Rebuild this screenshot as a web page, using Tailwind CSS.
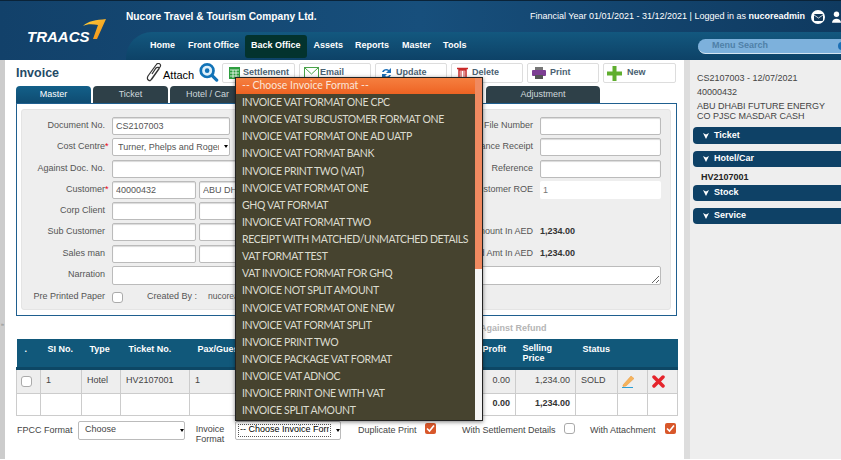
<!DOCTYPE html>
<html>
<head>
  <meta charset="UTF-8">
  <meta name="viewport" content="width=device-width, initial-scale=1.0">
  <script src="https://cdn.jsdelivr.net/npm/@tailwindcss/browser@4"></script>
</head>

<body class="relative w-[841px] h-[460px] overflow-hidden bg-white font-['Liberation_Sans',sans-serif] text-[9px] text-[#444]">

  <!-- top header -->
  <header class="flex h-[60px] border-t border-[#0a2338] bg-gradient-to-r from-[#12416a] via-[#174f7c] to-[#0f3a60]">
    <div class="w-[126px] shrink-0 pl-[27px] pt-[18px]">
      <div class="flex items-start">
        <span class="mt-[7px] text-[15px] font-bold italic text-white">TRAACS</span>
        <svg width="23" height="20" viewBox="0 0 23 20" class="-ml-[7px]"><defs><linearGradient id="sw" x1="0" y1="0" x2="1" y2="1"><stop offset="0" stop-color="#ffd23c"/><stop offset="1" stop-color="#ee8a14"/></linearGradient></defs><path d="M0 7 C5 2 13 1 23 0 L14 20 L10 20 L15 6 C9 5 4 5 0 7Z" fill="url(#sw)"/></svg>
      </div>
    </div>
    <div class="flex grow flex-col">
      <div class="flex h-[31px] items-center justify-between pt-[1px] text-white">
        <span class="text-[10.2px] font-bold">Nucore Travel &amp; Tourism Company Ltd.</span>
        <div class="flex items-center">
          <span>Financial Year 01/01/2021 - 31/12/2021 | Logged in as <b>nucoreadmin</b></span>
          <span class="ml-[6px] flex h-[14px] w-[14px] items-center justify-center rounded-full bg-white">
            <svg width="9" height="7" viewBox="0 0 9 7"><rect width="9" height="7" rx="1" fill="#12385a"/><path d="M0 1 L4.500 4 L9 1" fill="none" stroke="#fff" stroke-width=".8"/></svg>
          </span>
          <svg width="9" height="12" viewBox="0 0 10 13" class="ml-[7px]"><circle cx="5" cy="3.500" r="3" fill="#fff"/><path d="M0 13 C0 7 10 7 10 13Z" fill="#fff"/></svg>
        </div>
      </div>
      <nav class="flex h-[28px] items-center justify-between rounded-tl-[26px] bg-gradient-to-b from-[#13587f] to-[#0d4267] font-bold text-white">
        <div class="flex items-center pl-[24px]">
          <a class="mr-[13px]">Home</a>
          <a class="mr-[6px]">Front Office</a>
          <a class="mr-[7px] flex h-[23px] items-center rounded-[3px] bg-[#03332e] px-[6px]">Back Office</a>
          <a class="mr-[12px]">Assets</a>
          <a class="mr-[13px]">Reports</a>
          <a class="mr-[12px]">Master</a>
          <a>Tools</a>
        </div>
        <div class="flex h-[15px] w-[143px] items-center justify-between rounded-l-full border-b border-[#d6e6f2] bg-[#7db1dc] pl-[14px] text-[#4f80a8]">
          <span>Menu Search</span>
          <span class="-mr-[1px] h-[8px] w-[4px] rounded-l-full bg-[#1b6fb5]"></span>
        </div>
      </nav>
    </div>
  </header>

  <div class="flex h-[399px]">
    <!-- collapse strip -->
    <div class="flex w-[5px] shrink-0 flex-col items-center bg-[#ccc] pt-[260px] text-[6px] text-[#888]">»</div>

    <main class="w-[679px] shrink-0 pl-[11px] pr-[7px]">
      <!-- title and actions -->
      <div class="flex h-[26px] items-center">
        <h1 class="w-[130px] text-[12.5px] font-bold text-[#244a66]">Invoice</h1>
        <div class="flex w-[76px] shrink-0 items-center">
          <svg width="17" height="20" viewBox="0 0 17 20"><path d="M4 18 L14 4 C16 1 12 -1 10 2 L2 13 C0 17 4 19 6 16 L13 6 C14 4 11 4 10 5 L6 11" fill="none" stroke="#333" stroke-width="1.200"/></svg>
          <span class="mt-[4px] text-[11px] text-black">Attach</span>
          <svg width="21" height="20" viewBox="0 0 22 22" class="-mt-[2px] ml-[4px]"><circle cx="9.500" cy="9.500" r="7" fill="#dff0fa" stroke="#1273b7" stroke-width="3"/><circle cx="9.500" cy="9.500" r="2.500" fill="#1273b7"/><path d="M15 15 L20 20" stroke="#1273b7" stroke-width="3.500" stroke-linecap="round"/></svg>
        </div>
        <div class="flex gap-[4px] font-bold text-[#4a6172]">
          <button class="flex h-[20px] w-[73px] items-center gap-[3px] rounded-[2px] border border-[#ddd] pl-[6px]">
            <svg width="11" height="12" viewBox="0 0 11 12"><rect width="11" height="12" fill="#2e9e3f"/><path d="M1 3h9M1 6h9M1 9h9M4 3v8M7 3v8" stroke="#fff" stroke-width=".8"/></svg>
            Settlement
          </button>
          <button class="flex h-[20px] w-[72px] items-center gap-[1px] rounded-[2px] border border-[#ddd] pl-[4px]">
            <svg width="15" height="12" viewBox="0 0 15 12"><rect x=".5" y=".5" width="14" height="11" fill="#fff" stroke="#4aa34a"/><path d="M1 1 L7.500 7 L14 1" fill="none" stroke="#4aa34a"/></svg>
            Email
          </button>
          <button class="flex h-[20px] w-[72px] items-center gap-[4px] rounded-[2px] border border-[#ddd] pl-[5px]">
            <svg width="11" height="13" viewBox="0 0 11 13"><path d="M1 5 C2 2 6 1 8 3 L10 1 L10 6 L5 6 L7 4 C5 3 3 4 3 5Z" fill="#1c6fb8"/><path d="M10 8 C9 11 5 12 3 10 L1 12 L1 7 L6 7 L4 9 C6 10 8 9 8 8Z" fill="#1c6fb8"/></svg>
            Update
          </button>
          <button class="flex h-[20px] w-[72px] items-center gap-[4px] rounded-[2px] border border-[#ddd] pl-[5px]">
            <svg width="11" height="13" viewBox="0 0 11 13"><path d="M0 1.500h11M2 3h7v10H2z" fill="none" stroke="#c92a2a" stroke-width="1.500"/><path d="M4 4v8M7 4v8" stroke="#c92a2a"/></svg>
            Delete
          </button>
          <button class="flex h-[20px] w-[72px] items-center gap-[4px] rounded-[2px] border border-[#ddd] pl-[4px]">
            <svg width="14" height="12" viewBox="0 0 14 12"><rect x="3" width="8" height="3" fill="#777"/><rect y="3" width="14" height="6" rx="1" fill="#7d3f93"/><rect x="3" y="8" width="8" height="4" fill="#555"/></svg>
            Print
          </button>
          <button class="flex h-[20px] w-[73px] items-center gap-[5px] rounded-[2px] border border-[#ddd] pl-[3px]">
            <svg width="15" height="15" viewBox="0 0 15 15"><path d="M5.500 0h4v5.500H15v4H9.500V15h-4V9.500H0v-4h5.500z" fill="#5fae2e"/></svg>
            New
          </button>
        </div>
      </div>

      <!-- tabs -->
      <div class="flex h-[17px] gap-[2px] text-center leading-[16px] text-[#cfd8dc]">
        <div class="w-[75px] rounded-t-[4px] bg-gradient-to-b from-[#136089] to-[#0f4c72] text-white">Master</div>
        <div class="w-[75px] rounded-t-[4px] bg-[#2e4048]">Ticket</div>
        <div class="w-[75px] rounded-t-[4px] bg-[#2e4048]">Hotel / Car</div>
        <div class="w-[75px] rounded-t-[4px] bg-[#2e4048]">Stock</div>
        <div class="w-[75px] rounded-t-[4px] bg-[#2e4048]">Service</div>
        <div class="w-[83px]"></div>
        <div class="w-[114px] rounded-t-[4px] bg-[#2e4048]">Adjustment</div>
      </div>

      <!-- master panel -->
      <section class="h-[213px] border border-[#1f5f8f] px-[4px] pt-[5px]">
        <div class="flex h-[201px] w-[650px] flex-col rounded-[3px] border border-[#e4e4e4] bg-[#eee] pt-[7px] text-[#555]">
          <div class="flex h-[21.3px]">
            <label class="mr-[7px] w-[83px] pt-[2px] text-right">Document No.</label>
            <input value="CS2107003" class="h-[18px] w-[118px] rounded-[2px] border border-[#bbb] bg-white px-[3px] shadow-[inset_0_1px_1px_rgba(0,0,0,0.15)]">
            <label class="w-[303px] pt-[2px] text-right">File Number</label>
            <input class="ml-[7px] h-[18px] w-[121px] rounded-[2px] border border-[#bbb] bg-white shadow-[inset_0_1px_1px_rgba(0,0,0,0.15)]">
          </div>
          <div class="flex h-[21.3px]">
            <label class="mr-[7px] w-[83px] pt-[2px] text-right">Cost Centre<span class="absolute text-[9px] text-red-600">*</span></label>
            <div class="relative h-[18px] w-[118px]">
              <select class="h-[18px] w-full appearance-none rounded-[2px] border border-[#bbb] bg-white pl-[5px] pr-[10px]"><option>Turner, Phelps and Rogers</option></select>
              <span class="absolute right-[2px] top-[7px] h-0 w-0 border-x-[2px] border-t-[3px] border-x-transparent border-t-black"></span>
            </div>
            <label class="w-[303px] pt-[2px] text-right">Advance Receipt</label>
            <input class="ml-[7px] h-[18px] w-[121px] rounded-[2px] border border-[#bbb] bg-white shadow-[inset_0_1px_1px_rgba(0,0,0,0.15)]">
          </div>
          <div class="flex h-[21.3px]">
            <label class="mr-[7px] w-[83px] pt-[2px] text-right">Against Doc. No.</label>
            <input class="h-[18px] w-[125px] rounded-[2px] border border-[#bbb] bg-white shadow-[inset_0_1px_1px_rgba(0,0,0,0.15)]">
            <label class="w-[296px] pt-[2px] text-right">Reference</label>
            <input class="ml-[7px] h-[18px] w-[121px] rounded-[2px] border border-[#bbb] bg-white shadow-[inset_0_1px_1px_rgba(0,0,0,0.15)]">
          </div>
          <div class="flex h-[21.3px]">
            <label class="mr-[7px] w-[83px] pt-[2px] text-right">Customer<span class="absolute text-[9px] text-red-600">*</span></label>
            <input value="40000432" class="h-[18px] w-[84px] rounded-[2px] border border-[#bbb] bg-white px-[3px] shadow-[inset_0_1px_1px_rgba(0,0,0,0.15)]">
            <input value="ABU DHABI FUTURE" class="ml-[3px] h-[18px] w-[80px] rounded-[2px] border border-[#bbb] bg-white px-[3px] shadow-[inset_0_1px_1px_rgba(0,0,0,0.15)]">
            <label class="w-[254px] pt-[2px] text-right">Customer ROE</label>
            <input value="1" class="ml-[7px] h-[18px] w-[121px] rounded-[2px] bg-white px-[3px] text-[#777]">
          </div>
          <div class="flex h-[21.3px]">
            <label class="mr-[7px] w-[83px] pt-[2px] text-right">Corp Client</label>
            <input class="h-[18px] w-[84px] rounded-[2px] border border-[#bbb] bg-white shadow-[inset_0_1px_1px_rgba(0,0,0,0.15)]">
            <input class="ml-[3px] h-[18px] w-[80px] rounded-[2px] border border-[#bbb] bg-white shadow-[inset_0_1px_1px_rgba(0,0,0,0.15)]">
          </div>
          <div class="flex h-[21.3px]">
            <label class="mr-[7px] w-[83px] pt-[2px] text-right">Sub Customer</label>
            <input class="h-[18px] w-[84px] rounded-[2px] border border-[#bbb] bg-white shadow-[inset_0_1px_1px_rgba(0,0,0,0.15)]">
            <input class="ml-[3px] h-[18px] w-[80px] rounded-[2px] border border-[#bbb] bg-white shadow-[inset_0_1px_1px_rgba(0,0,0,0.15)]">
            <label class="w-[254px] pt-[2px] text-right">Amount In AED</label>
            <b class="ml-[7px] pt-[2px] text-[#333]">1,234.00</b>
          </div>
          <div class="flex h-[21.3px]">
            <label class="mr-[7px] w-[83px] pt-[2px] text-right">Sales man</label>
            <input class="h-[18px] w-[84px] rounded-[2px] border border-[#bbb] bg-white shadow-[inset_0_1px_1px_rgba(0,0,0,0.15)]">
            <input class="ml-[3px] h-[18px] w-[80px] rounded-[2px] border border-[#bbb] bg-white shadow-[inset_0_1px_1px_rgba(0,0,0,0.15)]">
            <label class="w-[254px] pt-[2px] text-right">Matched Amt In AED</label>
            <b class="ml-[7px] pt-[2px] text-[#333]">1,234.00</b>
          </div>
          <div class="flex h-[24px]">
            <label class="mr-[7px] w-[83px] pt-[2px] text-right">Narration</label>
            <textarea class="h-[19px] w-[549px] rounded-[2px] border border-[#bbb] bg-white"></textarea>
          </div>
          <div class="flex h-[14px] items-start">
            <label class="mr-[7px] w-[83px] text-right">Pre Printed Paper</label>
            <span class="mt-[2px] h-[11px] w-[11px] rounded-[3px] border border-[#aaa] bg-white"></span>
            <span class="ml-[24px]">Created By :</span>
            <span class="ml-[11px] text-[8.5px]">nucoreadmin</span>
          </div>
        </div>
      </section>

      <div class="h-[23px] pl-[464px] pt-[6px] font-bold text-[#b5b5b5]">Against Refund</div>

      <!-- ticket table -->
      <table class="w-[661px] table-fixed border-collapse">
        <colgroup>
          <col class="w-[24px]"><col class="w-[41px]"><col class="w-[39px]"><col class="w-[69px]"><col class="w-[62px]"><col class="w-[219px]"><col class="w-[45px]"><col class="w-[60px]"><col class="w-[42px]"><col class="w-[30px]"><col class="w-[30px]">
        </colgroup>
        <thead class="bg-[#11587a] text-white">
          <tr class="h-[29px] border-b-[3px] border-[#0d4765] align-top font-bold">
            <th class="pl-[8px] pt-[4px] text-left">.</th>
            <th class="pl-[7px] pt-[4px] text-left">SI No.</th>
            <th class="pl-[8px] pt-[4px] text-left">Type</th>
            <th class="pl-[8px] pt-[4px] text-left">Ticket No.</th>
            <th class="pl-[8px] pt-[4px] text-left">Pax/Guest</th>
            <th></th>
            <th class="pl-[12px] pt-[4px] text-left">Profit</th>
            <th class="pl-[7px] pt-[4px] text-left leading-[10px]">Selling Price</th>
            <th class="pl-[7px] pt-[4px] text-left">Status</th>
            <th></th><th></th>
          </tr>
        </thead>
        <tbody>
          <tr class="h-[25px] bg-[#eee]">
            <td class="border border-[#ccc] pl-[4px]"><span class="block h-[11px] w-[11px] rounded-[3px] border border-[#aaa] bg-white"></span></td>
            <td class="border border-[#ccc] pl-[5px]">1</td>
            <td class="border border-[#ccc] pl-[5px]">Hotel</td>
            <td class="border border-[#ccc] pl-[5px]">HV2107001</td>
            <td class="border border-[#ccc] pl-[5px]">1</td>
            <td class="border border-[#ccc]"></td>
            <td class="border border-[#ccc] pr-[5px] text-right">0.00</td>
            <td class="border border-[#ccc] pr-[5px] text-right">1,234.00</td>
            <td class="border border-[#ccc] pl-[5px]">SOLD</td>
            <td class="border border-[#ccc] pl-[4px]">
              <svg width="13" height="13" viewBox="0 0 13 13"><path d="M1 10 L9 1 L12 3.500 L4 11 L1 11.500Z" fill="#f5b35c" stroke="#e8963a" stroke-width=".5"/><path d="M0 12.500h11" stroke="#2a9fd6"/></svg>
            </td>
            <td class="border border-[#ccc] pl-[4px]">
              <svg width="13" height="13" viewBox="0 0 13 13"><path d="M2 2 L11 11 M11 2 L2 11" stroke="#e5242c" stroke-width="3.500" stroke-linecap="round"/></svg>
            </td>
          </tr>
          <tr class="h-[22px] font-bold text-[#333]">
            <td class="border border-[#ccc]"></td><td class="border border-[#ccc]"></td><td class="border border-[#ccc]"></td><td class="border border-[#ccc]"></td><td class="border border-[#ccc]"></td><td class="border border-[#ccc]"></td>
            <td class="border border-[#ccc] pr-[5px] text-right">0.00</td>
            <td class="border border-[#ccc] pr-[5px] text-right">1,234.00</td>
            <td class="border border-[#ccc]"></td><td class="border border-[#ccc]"></td><td class="border border-[#ccc]"></td>
          </tr>
        </tbody>
      </table>

      <!-- print options -->
      <div class="mt-[5px] flex items-start">
        <label class="mt-[3px] w-[62px] whitespace-nowrap pl-[1px]">FPCC Format</label>
        <div class="relative h-[19px] w-[107px]">
          <select class="h-[19px] w-full appearance-none rounded-[2px] border border-[#bbb] bg-white pl-[6px]"><option>Choose</option></select>
          <span class="absolute right-[1px] top-[8px] h-0 w-0 border-x-[2px] border-t-[3px] border-x-transparent border-t-black"></span>
        </div>
        <label class="mt-[3px] w-[50px] text-center leading-[10px]">Invoice Format</label>
        <div class="relative h-[19px] w-[106px]">
          <select class="h-[19px] w-full appearance-none rounded-[2px] border border-[#bbb] bg-white pl-[4px] pr-[11px] text-black"><option>-- Choose Invoice Format --</option></select>
          <span class="absolute bottom-[3px] left-[3px] right-[10px] top-[3px] border border-dotted border-[#555]"></span>
          <span class="absolute right-[1px] top-[8px] h-0 w-0 border-x-[2px] border-t-[3px] border-x-transparent border-t-black"></span>
        </div>
        <label class="ml-[17px] mt-[3px] w-[67px] whitespace-nowrap">Duplicate Print</label>
        <span class="mt-[2px] flex h-[11px] w-[11px] items-center justify-center rounded-[2px] bg-[#d8572a]">
          <svg width="9" height="9" viewBox="0 0 9 9"><path d="M1 4.500 L3.500 7 L8 1.500" fill="none" stroke="#fff" stroke-width="1.600"/></svg>
        </span>
        <label class="ml-[26px] mt-[3px] w-[102px] whitespace-nowrap">With Settlement Details</label>
        <span class="mt-[2px] h-[11px] w-[11px] rounded-[3px] border border-[#aaa] bg-white"></span>
        <label class="ml-[15px] mt-[3px] w-[75px] whitespace-nowrap">With Attachment</label>
        <span class="mt-[2px] flex h-[11px] w-[11px] items-center justify-center rounded-[2px] bg-[#d8572a]">
          <svg width="9" height="9" viewBox="0 0 9 9"><path d="M1 4.500 L3.500 7 L8 1.500" fill="none" stroke="#fff" stroke-width="1.600"/></svg>
        </span>
      </div>
    </main>

    <!-- summary side panel -->
    <aside class="grow border-l-[6px] border-[#ddd] bg-[#eee] pl-[3px] pt-[11px] text-[#444]">
      <p class="pl-[4px] leading-[14px]">CS2107003 - 12/07/2021</p>
      <p class="pl-[4px] leading-[14px]">40000432</p>
      <p class="pl-[4px] pt-[2px] leading-[10px]">ABU DHABI FUTURE ENERGY<br>CO PJSC MASDAR CASH</p>
      <div class="mt-[6px] flex h-[17px] items-center gap-[5px] rounded-l-[4px] bg-[#0e4166] pl-[10px] font-bold text-white">
        <svg width="6" height="6" viewBox="0 0 6 6"><path d="M0 0 L3 1.500 L6 0 L3 6Z" fill="#fff"/></svg>Ticket
      </div>
      <div class="mt-[7px] flex h-[16px] items-center gap-[5px] rounded-l-[4px] bg-[#0e4166] pl-[10px] font-bold text-white">
        <svg width="6" height="6" viewBox="0 0 6 6"><path d="M0 0 L3 1.500 L6 0 L3 6Z" fill="#fff"/></svg>Hotel/Car
      </div>
      <p class="h-[18px] pl-[8px] pt-[4px] font-bold text-[#222]">HV2107001</p>
      <div class="flex h-[16px] items-center gap-[5px] rounded-l-[4px] bg-[#0e4166] pl-[10px] font-bold text-white">
        <svg width="6" height="6" viewBox="0 0 6 6"><path d="M0 0 L3 1.500 L6 0 L3 6Z" fill="#fff"/></svg>Stock
      </div>
      <div class="mt-[7px] flex h-[16px] items-center gap-[5px] rounded-l-[4px] bg-[#0e4166] pl-[10px] font-bold text-white">
        <svg width="6" height="6" viewBox="0 0 6 6"><path d="M0 0 L3 1.500 L6 0 L3 6Z" fill="#fff"/></svg>Service
      </div>
    </aside>
  </div>

  <!-- open invoice format list -->
  <div class="absolute left-[235px] top-[77px] flex h-[344px] w-[248px] border border-[#222] bg-white font-['Lato',sans-serif] text-[10.5px] tracking-[-0.36px] whitespace-nowrap text-[#dcdcd0] shadow-[0_1px_4px_rgba(0,0,0,0.5)]">
    <ul class="w-[239px] bg-[#46432f] leading-[17.13px]">
      <li class="h-[16px] bg-gradient-to-b from-[#f57f3f] to-[#ee6322] pl-[6px] leading-[15px] tracking-[0px] text-[#fbe5d8]">-- Choose Invoice Format --</li>
      <li class="pl-[6px]">INVOICE VAT FORMAT ONE CPC</li>
      <li class="pl-[6px]">INVOICE VAT SUBCUSTOMER FORMAT ONE</li>
      <li class="pl-[6px]">INVOICE VAT FORMAT ONE AD UATP</li>
      <li class="pl-[6px]">INVOICE VAT FORMAT BANK</li>
      <li class="pl-[6px]">INVOICE PRINT TWO (VAT)</li>
      <li class="pl-[6px]">INVOICE VAT FORMAT ONE</li>
      <li class="pl-[6px]">GHQ VAT FORMAT</li>
      <li class="pl-[6px]">INVOICE VAT FORMAT TWO</li>
      <li class="pl-[6px]">RECEIPT WITH MATCHED/UNMATCHED DETAILS</li>
      <li class="pl-[6px]">VAT FORMAT TEST</li>
      <li class="pl-[6px]">VAT INVOICE FORMAT FOR GHQ</li>
      <li class="pl-[6px]">INVOICE NOT SPLIT AMOUNT</li>
      <li class="pl-[6px]">INVOICE VAT FORMAT ONE NEW</li>
      <li class="pl-[6px]">INVOICE VAT FORMAT SPLIT</li>
      <li class="pl-[6px]">INVOICE PRINT TWO</li>
      <li class="pl-[6px]">INVOICE PACKAGE VAT FORMAT</li>
      <li class="pl-[6px]">INVOICE VAT ADNOC</li>
      <li class="pl-[6px]">INVOICE PRINT ONE WITH VAT</li>
      <li class="pl-[6px]">INVOICE SPLIT AMOUNT</li>
    </ul>
    <div class="w-[7px] bg-[#f5f5f5]"><div class="h-[191px] bg-[#f08a60]"></div></div>
  </div>
</body>
</html>
